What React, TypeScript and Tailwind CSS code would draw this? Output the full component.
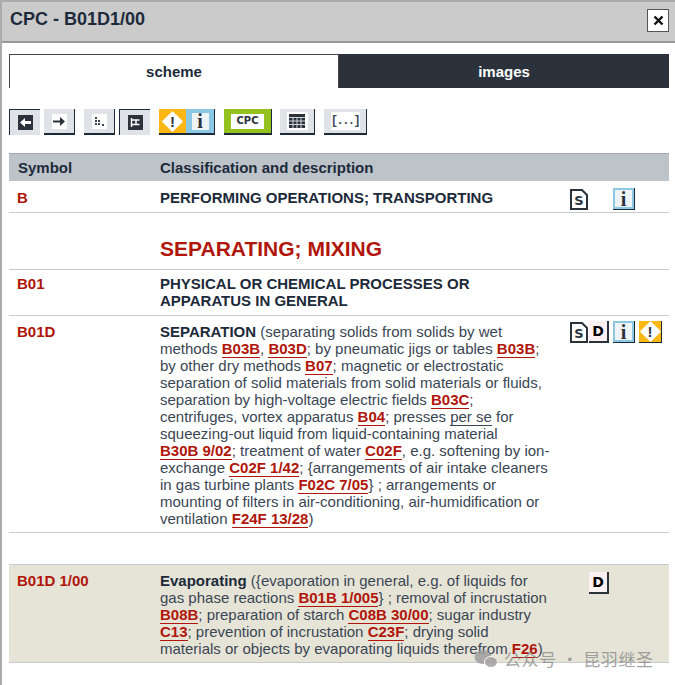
import React from "react";

const L = ({ children }: { children: React.ReactNode }) => (
  <span className="font-bold text-[#b0160a] border-b border-[#b0160a]">{children}</span>
);

const Info = ({ box = "" }: { box?: string }) => (
  <div className={`flex items-center justify-center bg-[#8cc8e4] border-r border-b border-[#1c2a3a] ${box}`}>
    <div className="w-[17px] h-[17px] bg-[#eef3f6] flex items-center justify-center font-['Liberation_Serif',serif] font-bold text-[20px] leading-none text-[#2b323c]">i</div>
  </div>
);

const Warn = ({ box = "" }: { box?: string }) => (
  <div className={`relative flex items-center justify-center bg-[#fdb714] border-b border-r border-[#1c2a3a] ${box}`}>
    <div className="w-[15px] h-[15px] bg-white rotate-45" />
    <span className="absolute font-bold text-[15px] leading-none text-[#2b323c]">!</span>
  </div>
);

const DocS = () => (
  <div className="relative w-[18px] h-[21px] flex items-center justify-center">
    <svg className="absolute inset-0" width="18" height="21" viewBox="0 0 18 21">
      <path d="M1 1h11l5 5v14H1z" fill="#fff" stroke="#2b323c" strokeWidth="2" />
    </svg>
    <span className="relative mt-[2px] text-[13px] leading-none font-bold text-[#2b323c] font-['DejaVu_Sans',sans-serif]">S</span>
  </div>
);

const DocD = () => (
  <div className="w-[20px] h-[22px] bg-[#fdf0f2] border-r-2 border-b-2 border-[#2b323c] flex items-center justify-center">
    <span className="text-[14px] leading-none font-bold text-black font-['DejaVu_Sans',sans-serif]">D</span>
  </div>
);

const Tool = ({ w, pressed, children }: { w: string; pressed?: boolean; children: React.ReactNode }) => (
  <div
    className={`${w} h-[26px] bg-[#dfe3e8] flex items-center justify-center border-[#1c2a3a] ${
      pressed ? "border-t border-l" : "border-b-2 border-r"
    }`}
  >
    {children}
  </div>
);

const Row = ({
  sym,
  children,
  icons,
  cls = "",
}: {
  sym: string;
  children: React.ReactNode;
  icons?: React.ReactNode;
  cls?: string;
}) => (
  <div className={`grid grid-cols-[151px_409px_1fr] border-b border-[#c8cbcc] ${cls}`}>
    <div className="pl-[8px] font-bold text-[#b0160a]">{sym}</div>
    <div>{children}</div>
    <div>{icons}</div>
  </div>
);

export default function App() {
  return (
    <div className="relative w-[675px] h-[685px] overflow-hidden bg-white border-l-2 border-t-2 border-[#ababab] font-['Liberation_Sans',Arial,sans-serif] text-[15px] leading-[17px] text-[#3a4654]">
      <header className="h-[41px] bg-[#cbcbcb] border-b-2 border-[#999] flex items-start justify-between pl-[8px] pr-[6px]">
        <h1 className="mt-[7px] text-[18px] leading-[20px] font-bold text-[#1c2a3a]">CPC - B01D1/00</h1>
        <div className="mt-[7px] w-[22px] h-[23px] bg-white border border-[#555] flex items-center justify-center">
          <svg width="11" height="11" viewBox="0 0 11 11"><path d="M1.5 1.5l8 8M9.5 1.5l-8 8" stroke="#111" strokeWidth="2.4" /></svg>
        </div>
      </header>

      <div className="px-[7px] pr-[6px]">
        <nav className="mt-[11px] flex h-[34px] font-bold pt-0">
          <div className="w-[330px] border-t border-l border-r border-[#444] flex items-center justify-center text-[#1c2a3a]">scheme</div>
          <div className="w-[330px] bg-[#2b323c] flex items-center justify-center text-white">images</div>
        </nav>

        <div className="mt-[21px] flex items-start h-[26px]">
          <Tool w="w-[31px]" pressed>
            <div className="w-[15px] h-[15px] bg-[#2b323c] flex items-center justify-center">
              <svg width="11" height="9" viewBox="0 0 11 9"><path d="M5 0L0 4.5 5 9V6h6V3H5z" fill="#fff" /></svg>
            </div>
          </Tool>
          <div className="w-[4px]" />
          <Tool w="w-[31px]">
            <div className="w-[15px] h-[15px] bg-white flex items-center justify-center">
              <svg width="12" height="9" viewBox="0 0 12 9"><path d="M7 0l5 4.5L7 9V5.5H0v-2h7z" fill="#2b323c" /></svg>
            </div>
          </Tool>
          <div className="w-[9px]" />
          <Tool w="w-[31px]">
            <div className="w-[15px] h-[15px] bg-white flex items-center justify-center">
              <svg width="11" height="11" viewBox="0 0 11 11" fill="#3a4654"><path d="M1 1h2v2H1zM1 4h2v2H1zM1 7h2v2H1zM4 7h2v2H4zM8 8h2v2H8zM4 4h2v2H4z" /></svg>
            </div>
          </Tool>
          <div className="w-[4px]" />
          <Tool w="w-[31px]" pressed>
            <div className="w-[15px] h-[15px] bg-[#2b323c] flex items-center justify-center">
              <svg width="11" height="11" viewBox="0 0 11 11" fill="none" stroke="#fff" strokeWidth="1.5"><path d="M1.5 1v9M1.5 3h8M1.5 7.5h8M6 3v4.5" /></svg>
            </div>
          </Tool>
          <div className="w-[9px]" />
          <Warn box="w-[27px] h-[26px] border-r-0 border-b-2" />
          <Info box="w-[29px] h-[26px] border-b-2" />
          <div className="w-[9px]" />
          <div className="w-[48px] h-[26px] bg-[#95c11f] border-b-2 border-r border-[#1c2a3a] flex items-center justify-center">
            <div className="w-[33px] h-[15px] bg-white flex items-center justify-center font-['DejaVu_Sans',sans-serif] font-bold text-[10px] leading-none text-[#2b323c]">CPC</div>
          </div>
          <div className="w-[8px]" />
          <Tool w="w-[35px]">
            <div className="w-[21px] h-[18px] bg-white flex items-center justify-center">
              <svg width="16" height="14" viewBox="0 0 16 14">
                <rect width="16" height="14" fill="#2b323c" />
                <path d="M0 3.5h16M0 7h16M0 10.5h16M4 3v11M8 3v11M12 3v11" stroke="#dfe3e8" strokeWidth="0.9" />
              </svg>
            </div>
          </Tool>
          <div className="w-[9px]" />
          <Tool w="w-[43px]">
            <div className="w-[29px] h-[18px] bg-white flex items-center justify-center font-['Liberation_Mono',monospace] font-bold text-[12px] leading-none tracking-[-1.5px] text-[#3a4654]">[...]</div>
          </Tool>
        </div>

        <div className="mt-[18px] h-[28px] bg-[#bcc3c9] border-t border-[#a4a8ac] grid grid-cols-[151px_1fr] items-center font-bold text-[#1c2a3a]">
          <div className="pl-[9px]">Symbol</div>
          <div>Classification and description</div>
        </div>

        <Row
          sym="B"
          cls="h-[32px] pt-[8px]"
          icons={
            <div className="flex items-start gap-[25px] pl-[1px]">
              <DocS />
              <Info box="w-[22px] h-[22px] -mt-[1px]" />
            </div>
          }
        >
          <span className="font-bold text-[#1c2a3a]">PERFORMING OPERATIONS; TRANSPORTING</span>
        </Row>

        <div className="h-[57px] border-b border-[#c8cbcc] pl-[151px] pt-[24px] text-[21px] leading-[24px] font-bold text-[#b0160a]">
          SEPARATING; MIXING
        </div>

        <Row sym="B01" cls="h-[46px] pt-[5px]">
          <span className="font-bold text-[#1c2a3a]">
            PHYSICAL OR CHEMICAL PROCESSES OR
            <br />
            APPARATUS IN GENERAL
          </span>
        </Row>

        <Row
          sym="B01D"
          cls="h-[217px] pt-[7px]"
          icons={
            <div className="flex items-start gap-[1px] -mt-[2px] pl-[1px]">
              <div className="mt-[1px]"><DocS /></div>
              <DocD />
              <Info box="w-[22px] h-[22px] ml-[3px]" />
              <Warn box="w-[23px] h-[22px] ml-[3px]" />
            </div>
          }
        >
          <span className="font-bold text-[#1c2a3a]">SEPARATION</span> (separating solids from solids by wet
          <br />
          methods <L>B03B</L>, <L>B03D</L>; by pneumatic jigs or tables <L>B03B</L>;
          <br />
          by other dry methods <L>B07</L>; magnetic or electrostatic
          <br />
          separation of solid materials from solid materials or fluids,
          <br />
          separation by high-voltage electric fields <L>B03C</L>;
          <br />
          centrifuges, vortex apparatus <L>B04</L>; presses <span className="border-b border-[#3a4654]">per se</span> for
          <br />
          squeezing-out liquid from liquid-containing material
          <br />
          <L>B30B 9/02</L>; treatment of water <L>C02F</L>, e.g. softening by ion-
          <br />
          exchange <L>C02F 1/42</L>; {"{"}arrangements of air intake cleaners
          <br />
          in gas turbine plants <L>F02C 7/05</L>{"}"} ; arrangements or
          <br />
          mounting of filters in air-conditioning, air-humidification or
          <br />
          ventilation <L>F24F 13/28</L>)
        </Row>

        <div className="h-[31px]" />

        <Row
          sym="B01D 1/00"
          cls="h-[99px] pt-[7px] bg-[#e6e4d7] border-t"
          icons={
            <div className="pl-[20px]">
              <DocD />
            </div>
          }
        >
          <span className="font-bold text-[#1c2a3a]">Evaporating</span> ({"{"}evaporation in general, e.g. of liquids for
          <br />
          gas phase reactions <L>B01B 1/005</L>{"}"} ; removal of incrustation
          <br />
          <L>B08B</L>; preparation of starch <L>C08B 30/00</L>; sugar industry
          <br />
          <L>C13</L>; prevention of incrustation <L>C23F</L>; drying solid
          <br />
          materials or objects by evaporating liquids therefrom <L>F26</L>)
        </Row>
      </div>

      <div className="absolute left-[472px] top-[647px] flex items-center gap-[6px] text-[#8a8a8a]/80 text-[17px] leading-[20px] font-['Noto_Sans_CJK_SC',sans-serif] tracking-[0.6px] pointer-events-none">
        <svg width="24" height="20" viewBox="0 0 24 20" fill="#9a9a9a" opacity="0.8">
          <ellipse cx="9" cy="8" rx="8.5" ry="7" />
          <ellipse cx="17" cy="13" rx="6.5" ry="5.5" stroke="#fff" />
        </svg>
        <span>公众号 · 昆羽继圣</span>
      </div>
    </div>
  );
}
